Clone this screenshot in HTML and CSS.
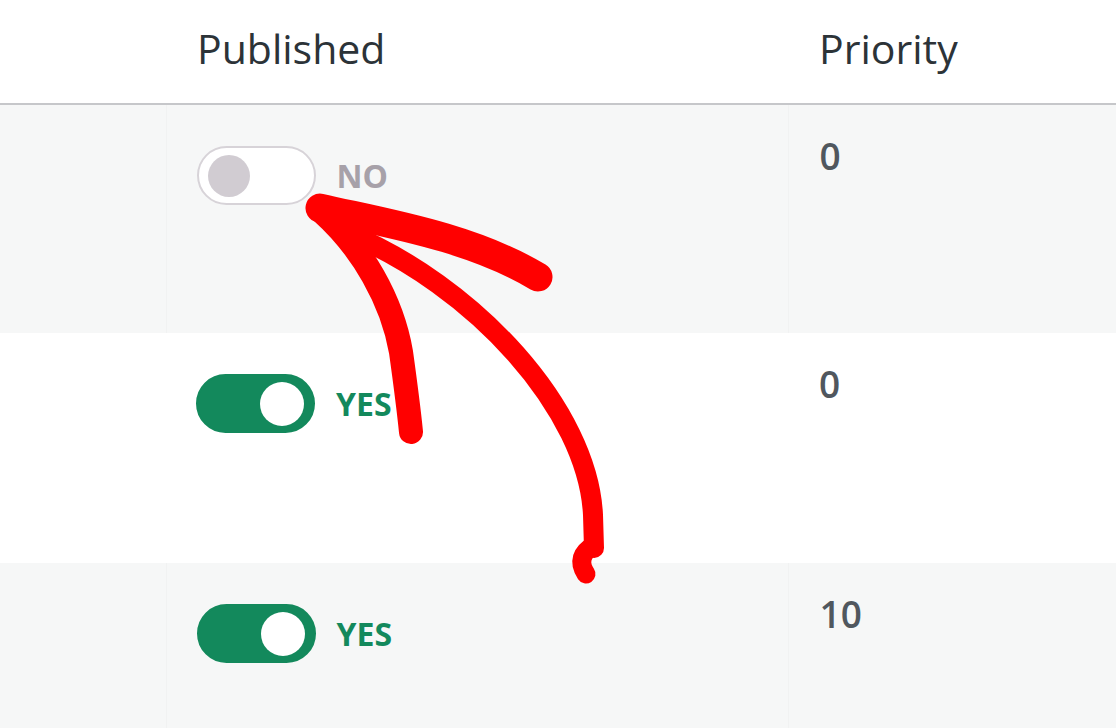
FILE: index.html
```html
<!DOCTYPE html>
<html lang="en">
<head>
    <meta charset="UTF-8">
    <meta name="viewport" content="width=device-width, initial-scale=1.0">
    <title>Published</title>
    <link rel="stylesheet" href="styles.css">
</head>
<body>
    <div class="page">
        <table class="list">
            <thead>
                <tr>
                    <th class="col-check"></th>
                    <th class="col-published">Published</th>
                    <th class="col-priority">Priority</th>
                </tr>
            </thead>
            <tbody>
                <tr class="alt">
                    <td class="col-check"></td>
                    <td class="col-published">
                        <div class="status">
                            <span class="toggle"><span class="knob"></span></span>
                            <span class="label">NO</span>
                        </div>
                    </td>
                    <td class="col-priority">0</td>
                </tr>
                <tr>
                    <td class="col-check"></td>
                    <td class="col-published">
                        <div class="status on">
                            <span class="toggle"><span class="knob"></span></span>
                            <span class="label">YES</span>
                        </div>
                    </td>
                    <td class="col-priority">0</td>
                </tr>
                <tr class="alt">
                    <td class="col-check"></td>
                    <td class="col-published">
                        <div class="status on">
                            <span class="toggle"><span class="knob"></span></span>
                            <span class="label">YES</span>
                        </div>
                    </td>
                    <td class="col-priority">10</td>
                </tr>
            </tbody>
        </table>

        <!-- hand drawn annotation -->
        <svg class="arrow" width="1116" height="728" viewBox="0 0 1116 728">
            <g fill="none" stroke="#ff0000" stroke-linecap="round" stroke-linejoin="round">
                <path d="M 322 212 C 362 248, 392 300, 401 352 C 406 388, 409 412, 411 432" stroke-width="24"/>
                <path d="M 320 208 C 380 222, 470 236, 538 277" stroke-width="29"/>
                <path d="M 345 232 C 475 285, 588 410, 593 515 L 594 548" stroke-width="20"/>
                <path d="M 593 546 C 582 552, 578 562, 586 574" stroke-width="19"/>
            </g>
        </svg>
    </div>
</body>
</html>
```

FILE: styles.css
```css
body {
    margin: 0;
    font-family: 'Open Sans', 'Noto Sans', sans-serif;
    background: #ffffff;
    color: #2c3338;
}

.page {
    position: relative;
    width: 1116px;
    height: 728px;
    overflow: hidden;
}

.list {
    width: 1116px;
    border-collapse: collapse;
    table-layout: fixed;
}

.list th {
    height: 104px;
    padding: 21px 0 0 31px;
    text-align: left;
    vertical-align: top;
    font-size: 41px;
    font-weight: 400;
    line-height: 1.362;
    color: #2c3338;
    border-bottom: 2px solid #c6c7ca;
    box-sizing: border-box;
}

.list td {
    height: 229px;
    padding: 0 0 0 30px;
    vertical-align: top;
    box-sizing: border-box;
}

.list tbody tr:nth-child(2) td {
    height: 230px;
}

.list tr.alt td {
    background: #f6f7f7;
}

.list tr.alt td + td {
    border-left: 1px solid #f1f2f2;
}

.col-check {
    width: 166px;
}

.col-published {
    width: 622px;
}

td.col-published {
    padding-top: 41px !important;
}

td.col-priority {
    padding-top: 26px !important;
    padding-left: 31px;
    font-size: 37px;
    font-weight: 600;
    line-height: 1.362;
    color: #50575e;
}

.status {
    display: flex;
    align-items: center;
    gap: 21px;
}

.toggle {
    display: flex;
    align-items: center;
    width: 119px;
    height: 59px;
    padding: 0 9px;
    border: 2px solid #d7d3d8;
    border-radius: 30px;
    background: #ffffff;
    box-sizing: border-box;
}

.knob {
    width: 42px;
    height: 42px;
    border-radius: 50%;
    background: #d1ccd2;
}

.label {
    font-size: 32px;
    font-weight: 700;
    color: #a7a1a9;
}

.status.on .toggle {
    justify-content: flex-end;
    border-color: #13895c;
    background: #13895c;
}

.status.on .knob {
    width: 44px;
    height: 44px;
    background: #ffffff;
}

.status.on .label {
    color: #13895c;
}

.arrow {
    position: absolute;
    top: 0;
    left: 0;
    pointer-events: none;
}
```
